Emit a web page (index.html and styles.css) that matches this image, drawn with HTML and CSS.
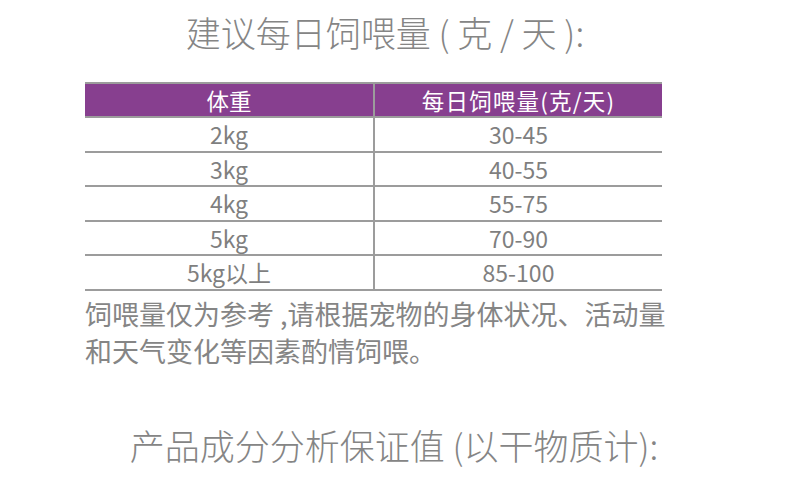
FILE: index.html
```html
<!DOCTYPE html>
<html lang="zh-CN">
<head>
<meta charset="utf-8">
<link rel="stylesheet" href="styles.css">
</head>
<body>
<div class="page">
  <h2 class="title title-top">建议每日饲喂量 ( 克 / 天 ):</h2>
  <table class="feed">
    <thead>
      <tr><th>体重</th><th class="wide">每日饲喂量(克/天)</th></tr>
    </thead>
    <tbody>
      <tr><td>2kg</td><td>30-45</td></tr>
      <tr><td>3kg</td><td>40-55</td></tr>
      <tr><td>4kg</td><td>55-75</td></tr>
      <tr><td>5kg</td><td>70-90</td></tr>
      <tr><td>5kg以上</td><td>85-100</td></tr>
    </tbody>
  </table>
  <p class="note">饲喂量仅为参考 ,请根据宠物的身体状况、活动量<br>和天气变化等因素酌情饲喂。</p>
  <h2 class="title title-bottom">产品成分分析保证值 (以干物质计):</h2>
</div>
</body>
</html>
```

FILE: styles.css
```css
html, body {
  margin: 0;
  padding: 0;
  background: #ffffff;
}
body {
  font-family: "Noto Sans CJK SC", "Noto Sans", sans-serif;
  color: #808080;
}
.page {
  width: 790px;
  height: 488px;
  overflow: hidden;
  display: flex;
  flex-direction: column;
}
.title {
  margin: 0;
  font-weight: 300;
  font-size: 35px;
  line-height: 40px;
  color: #858585;
  text-align: center;
  white-space: nowrap;
}
.title-top {
  padding-top: 12px;
  padding-right: 20px;
  height: 40px;
  margin-bottom: 30px;
}
.feed {
  margin-left: 85px;
  width: 577px;
  border-collapse: collapse;
  table-layout: fixed;
}
.feed th, .feed td {
  padding: 0;
  text-align: center;
  font-weight: 400;
}
.feed th {
  background: #873f8f;
  color: #ffffff;
  font-size: 22.5px;
  height: 32px;
  border-top: 2px solid #9c9c9c;
  border-bottom: 2px solid #9c9c9c;
  line-height: 32px;
}
.feed th.wide {
  letter-spacing: 1.2px;
}
.feed th:first-child, .feed td:first-child {
  width: 288px;
  border-right: 2px solid #9c9c9c;
}
.feed td {
  font-size: 23px;
  height: 32.5px;
  line-height: 32px;
  border-bottom: 2px solid #9c9c9c;
  color: #7f7f7f;
}
.note {
  margin: 0 0 0 85px;
  width: 600px;
  font-size: 27px;
  line-height: 37px;
  color: #858585;
  padding-top: 4px;
  white-space: nowrap;
}
.title-bottom {
  margin-top: 56px;
  padding-right: 2px;
}
```
